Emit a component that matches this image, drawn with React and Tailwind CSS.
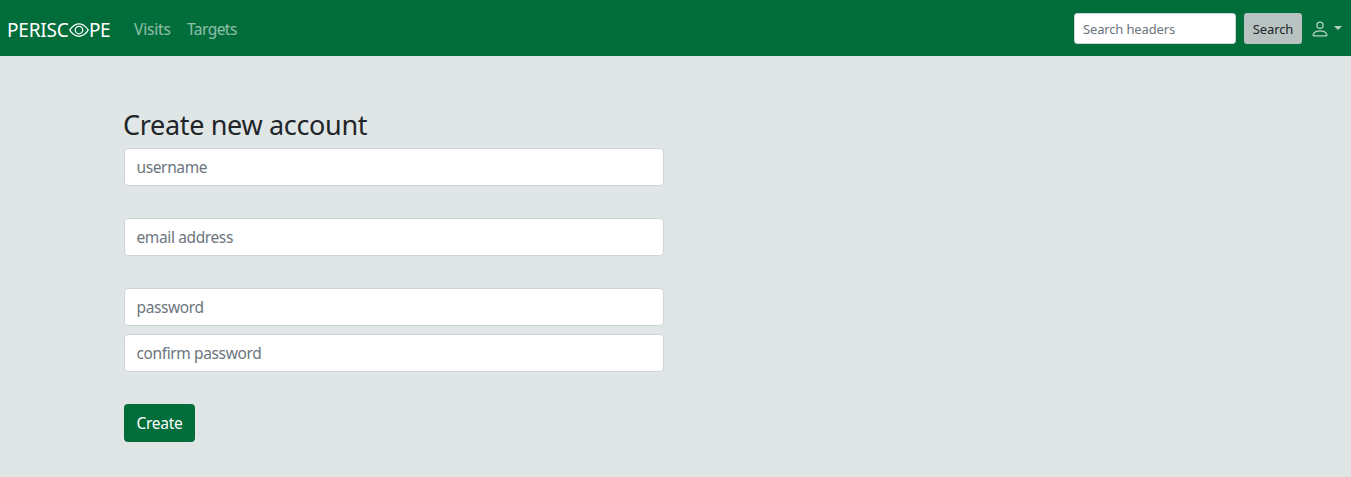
import { BsEye, BsPerson } from "react-icons/bs";

const field =
  "block h-[38px] w-full rounded border border-[#ced4da] bg-white pr-3 pl-[11.5px] text-[15.5px] leading-6 tracking-[-0.38px] text-[#212529] outline-none placeholder:text-[#6c757d] placeholder:opacity-100";

function Navbar() {
  return (
    <nav className="flex h-14 items-center bg-[#006d3b] pl-[7px] pr-[9px]">
      <a href="#" className="flex h-[38px] w-[103px] items-center whitespace-nowrap pt-[3px] text-[19px] text-white">
        <span className="inline-block w-[62px] pt-px tracking-[-0.2px]">PERISC</span>
        <BsEye className="size-5 shrink-0" />
        <span className="pt-px tracking-[-0.6px]">PE</span>
      </a>
      <div className="ml-6 flex gap-4 pt-[2px] text-[15.5px] leading-6 text-white/55">
        <a href="#" className="w-[37px] whitespace-nowrap tracking-[-0.15px]">Visits</a>
        <a href="#" className="whitespace-nowrap tracking-[-0.55px]">Targets</a>
      </div>
      <form className="ml-auto flex items-center gap-2" onSubmit={(e) => e.preventDefault()}>
        <input
          type="search"
          placeholder="Search headers"
          className="h-[31px] w-[162px] rounded-[3.2px] border border-[#ced4da] bg-white px-2 pt-px text-[13px] tracking-[-0.15px] text-[#212529] outline-none placeholder:text-[#6c757d] placeholder:opacity-100"
        />
        <button className="h-[31px] w-[58px] rounded-[3.2px] bg-[#b8c3c1] pt-[3px] text-[13px] tracking-[-0.1px] text-[#212529]">
          Search
        </button>
      </form>
      <button className="ml-2 flex items-center pt-[2px] text-[#b3d3c4]">
        <BsPerson className="size-5" />
        <span className="mb-[3px] ml-1 border-x-[4px] border-t-[4px] border-x-transparent border-t-current" />
      </button>
    </nav>
  );
}

export default function App() {
  return (
    <div className="min-h-screen bg-[#e0e6e5] font-['Noto_Sans','Open_Sans',sans-serif] text-[#212529]">
      <Navbar />
      <main className="ml-[124px] w-[540px] pt-[51px]">
        <h1 className="-ml-px mb-2 h-[33px] whitespace-nowrap text-[27px] leading-[35px] tracking-[-0.33px]">Create new account</h1>
        <form className="flex flex-col" onSubmit={(e) => e.preventDefault()}>
          <input className={field} placeholder="username" />
          <input className={field + " mt-8"} placeholder="email address" />
          <input className={field + " mt-8"} type="password" placeholder="password" />
          <input className={field + " mt-2"} type="password" placeholder="confirm password" />
          <button className="mt-8 h-[38px] w-[71px] rounded bg-[#006d3b] pt-[2px] text-[15.5px] tracking-[-0.25px] text-white">Create</button>
        </form>
      </main>
    </div>
  );
}
